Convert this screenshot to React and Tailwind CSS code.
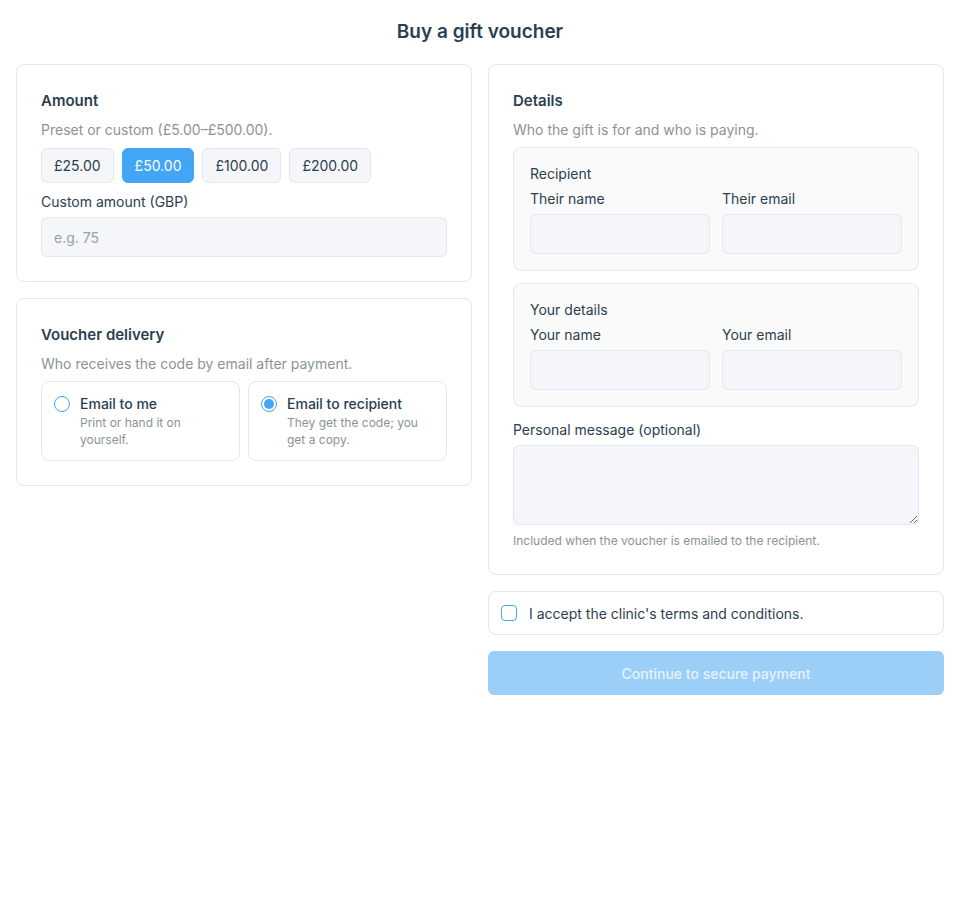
import { useState } from 'react';

const presets = ['£25.00', '£50.00', '£100.00', '£200.00'];

const Card = ({ title, subtitle, children, className = 'pb-6' }) => (
  <section className={`bg-white border border-[#e2e8f0] rounded-lg px-6 pt-[25px] ${className}`}>
    <h2 className="text-[15px] font-semibold text-[#2c3e50] leading-[22px]">{title}</h2>
    <p className="mt-[8px] text-[14px] text-[#8a9398] leading-5">{subtitle}</p>
    {children}
  </section>
);

const Field = ({ label }) => (
  <div className="flex flex-col">
    <label className="text-[14px] text-[#2c3e50] leading-5 mb-[5px]">{label}</label>
    <input className="h-10 rounded-md bg-[#f4f6f9] border border-[#e2e8f0] px-3 outline-none" />
  </div>
);

const SubBox = ({ title, children }) => (
  <div className="bg-[#fafafa] border border-[#e2e8f0] rounded-lg p-4">
    <div className="text-[14px] text-[#2c3e50] leading-5">{title}</div>
    <div className="grid grid-cols-2 gap-3 mt-[5px]">{children}</div>
  </div>
);

const Radio = ({ checked }) => (
  <span className="mt-[2px] w-4 h-4 shrink-0 rounded-full border border-[#42a5f5] bg-white flex items-center justify-center">
    {checked && <span className="w-[10px] h-[10px] rounded-full bg-[#42a5f5]" />}
  </span>
);

const Option = ({ title, desc, checked, onClick }) => (
  <button
    type="button"
    onClick={onClick}
    className="flex items-start gap-[10px] text-left border border-[#e2e8f0] rounded-lg pl-3 pr-4 pt-[12px] pb-[12px] bg-white"
  >
    <Radio checked={checked} />
    <span className="flex flex-col">
      <span className="text-[14px] font-medium text-[#2c3e50] leading-5">{title}</span>
      <span className="text-[12px] text-[#8a9398] leading-[17px]">{desc}</span>
    </span>
  </button>
);

export default function App() {
  const [amount, setAmount] = useState('£50.00');
  const [delivery, setDelivery] = useState('recipient');
  const [accepted, setAccepted] = useState(false);

  return (
    <div className="min-h-screen bg-white px-4 pt-[19px] text-[#2c3e50] font-['Inter',sans-serif]">
      <h1 className="text-center text-[19px] font-semibold leading-[26px] text-[#2c3e50]">Buy a gift voucher</h1>

      <div className="grid grid-cols-2 gap-4 mt-[19px] items-start">
        <div className="flex flex-col gap-4">
          <Card title="Amount" subtitle="Preset or custom (£5.00–£500.00).">
            <div className="flex gap-2 mt-[8px]">
              {presets.map((p) => (
                <button
                  key={p}
                  type="button"
                  onClick={() => setAmount(p)}
                  className={
                    amount === p
                      ? 'h-[35px] px-3 rounded-md text-[14px] bg-[#42a5f5] border border-[#42a5f5] text-white'
                      : 'h-[35px] px-3 rounded-md text-[14px] bg-[#f4f6f9] border border-[#e2e8f0] text-[#2c3e50]'
                  }
                >
                  {p}
                </button>
              ))}
            </div>
            <label className="block mt-[9px] text-[14px] leading-5 text-[#2c3e50]">Custom amount (GBP)</label>
            <input
              placeholder="e.g. 75"
              className="mt-[5px] w-full h-10 rounded-md bg-[#f4f6f9] border border-[#e2e8f0] px-3 text-[14px] placeholder:text-[#9aa1a6] outline-none"
            />
          </Card>

          <Card title="Voucher delivery" subtitle="Who receives the code by email after payment.">
            <div className="grid grid-cols-2 gap-2 mt-[7px]">
              <Option
                title="Email to me"
                desc="Print or hand it on yourself."
                checked={delivery === 'me'}
                onClick={() => setDelivery('me')}
              />
              <Option
                title="Email to recipient"
                desc="They get the code; you get a copy."
                checked={delivery === 'recipient'}
                onClick={() => setDelivery('recipient')}
              />
            </div>
          </Card>
        </div>

        <div className="flex flex-col gap-4">
          <Card title="Details" subtitle="Who the gift is for and who is paying." className="pb-[25px]">
            <div className="flex flex-col gap-3 mt-[7px]">
              <SubBox title="Recipient">
                <Field label="Their name" />
                <Field label="Their email" />
              </SubBox>
              <SubBox title="Your details">
                <Field label="Your name" />
                <Field label="Your email" />
              </SubBox>
            </div>
            <label className="block mt-[13px] text-[14px] leading-5 text-[#2c3e50]">Personal message (optional)</label>
            <textarea className="block mt-[5px] w-full h-20 rounded-md bg-[#f4f6f9] border border-[#e2e8f0] px-3 py-2 outline-none" />
            <p className="mt-[8px] text-[12px] leading-4 text-[#8a9398]">Included when the voucher is emailed to the recipient.</p>
          </Card>

          <label className="flex items-center gap-3 border border-[#e2e8f0] rounded-lg h-[44px] px-3 bg-white cursor-pointer">
            <input
              type="checkbox"
              checked={accepted}
              onChange={(e) => setAccepted(e.target.checked)}
              className="appearance-none w-4 h-4 rounded-[4px] border border-[#42a5f5] checked:bg-[#42a5f5]"
            />
            <span className="text-[14px] text-[#2c3e50]">I accept the clinic's terms and conditions.</span>
          </label>

          <button
            type="button"
            disabled={!accepted}
            className="h-11 rounded-md bg-[#42a5f5] disabled:bg-[#9bcff7] text-white disabled:text-[#e6f3fd] text-[14px] font-medium"
          >
            Continue to secure payment
          </button>
        </div>
      </div>
    </div>
  );
}
